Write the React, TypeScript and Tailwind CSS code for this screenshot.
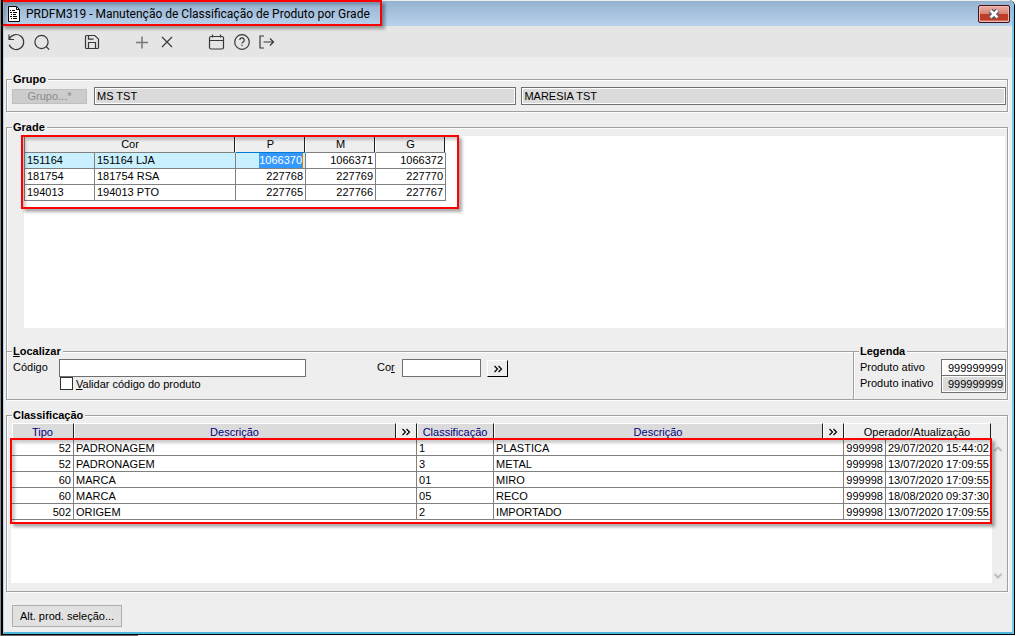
import type { ReactNode } from "react";

const gradeRows = [
  { code: "151164", name: "151164 LJA", sizes: ["1066370", "1066371", "1066372"] },
  { code: "181754", name: "181754 RSA", sizes: ["227768", "227769", "227770"] },
  { code: "194013", name: "194013 PTO", sizes: ["227765", "227766", "227767"] },
];

const classRows = [
  { type: "52", desc: "PADRONAGEM", cls: "1", clsDesc: "PLASTICA", user: "999998", date: "29/07/2020 15:44:02" },
  { type: "52", desc: "PADRONAGEM", cls: "3", clsDesc: "METAL", user: "999998", date: "13/07/2020 17:09:55" },
  { type: "60", desc: "MARCA", cls: "01", clsDesc: "MIRO", user: "999998", date: "13/07/2020 17:09:55" },
  { type: "60", desc: "MARCA", cls: "05", clsDesc: "RECO", user: "999998", date: "18/08/2020 09:37:30" },
  { type: "502", desc: "ORIGEM", cls: "2", clsDesc: "IMPORTADO", user: "999998", date: "13/07/2020 17:09:55" },
];

const fieldset = "min-w-0 border border-[#a0a0a0] shadow-[1px_1px_0_#fff,inset_1px_1px_0_#fff]";
const legend = "ml-[5px] h-[15px] bg-[#eeeeee] pr-0.5 pl-px text-[11px] leading-[15px] font-bold";
const textBox = "h-[18px] min-w-0 border border-[#707070] px-0.5 outline-none";
const gradeHead =
  "h-4 border-t border-r border-b border-t-white border-r-white p-0 text-center font-normal shadow-[inset_-1px_0_0_#202020]";
const classHead =
  "h-[17px] border-t border-r border-t-white border-r-[#202020] p-0 text-center font-normal shadow-[inset_1px_0_0_#fff]";
const cell = "h-4 overflow-hidden border-r border-b border-[#808080] px-0.5 whitespace-nowrap";
const gradeCell = `${cell} py-0`;
const classCell = `${cell} pt-px pb-0 leading-[14px]`;

const Highlight = ({ className }: { className: string }) => (
  <div
    className={`pointer-events-none absolute border-2 border-[#ff0000] shadow-[3px_3px_3px_#00000055,inset_3px_3px_3px_#00000033] ${className}`}
  />
);

const ToolButton = ({ label, className = "", children }: { label: string; className?: string; children: ReactNode }) => (
  <button type="button" aria-label={label} className={`flex w-[25px] justify-center text-[#383838] ${className}`}>
    <svg viewBox="0 0 20 20" className="size-5" fill="none" stroke="currentColor" strokeWidth="1.2">
      {children}
    </svg>
  </button>
);

const Chevrons = () => (
  <svg viewBox="0 0 10 8" className="mx-auto h-2 w-2.5" fill="none" stroke="#000" strokeWidth="1.2">
    <path d="M1.5 1 4.5 4l-3 3M5.5 1l3 3-3 3" />
  </svg>
);

const TitleBar = () => (
  <header className="relative flex h-[25px] items-center bg-linear-to-b from-[#94b2cf] to-[#b9d1ec] pr-0.5 pl-1">
    <svg viewBox="0 0 12 16" className="mr-1.5 h-4 w-3">
      <path d="M.5.5h8l3 3v12H.5z" fill="#fff" stroke="#000" />
      <path d="M8.5.5v3h3" fill="none" stroke="#000" />
      <path d="M2 4.5h1m1 0h3M2 6.5h2m1 0h4M3 8.5h1m1 0h3M2 10.5h2m1 0h4M3 12.5h1m1 0h4" stroke="#000" />
    </svg>
    <h1 className="font-[Roboto,sans-serif] text-[12px] leading-4 text-black">
      PRDFM319 - Manutenção de Classificação de Produto por Grade
    </h1>
    <button
      type="button"
      aria-label="Fechar"
      className="ml-auto flex h-[18px] w-8 items-center justify-center rounded-[2px] border border-[#42121b] bg-linear-to-b from-[#eab0a8] from-0% via-[#d98678] via-45% to-[#cf6b58] shadow-[inset_0_0_0_1px_#f0b8b0]"
    >
      <svg viewBox="0 0 30 16" className="h-4 w-[30px]">
        <path d="M1 8h28v6H1z" fill="#bd3d27" />
        <path d="m11.500 4.500 7 7m0-7-7 7" stroke="#4b5067" strokeWidth="5" />
        <path d="m11.500 4.500 7 7m0-7-7 7" stroke="#fff" strokeWidth="2.600" />
      </svg>
    </button>
    <Highlight className="-top-px -left-[3px] h-[26px] w-[381px]" />
  </header>
);

const Toolbar = () => (
  <nav className="flex h-[31px] items-center bg-[#e5e5e5]">
    <ToolButton label="Desfazer">
      <path d="M2 2.500v5h5M2.200 7.300a7.500 7.500 0 1 1 0 5.500" />
    </ToolButton>
    <ToolButton label="Pesquisar">
      <circle cx="9.500" cy="10" r="6.600" />
      <path d="m14.200 14.700 3 3" />
    </ToolButton>
    <ToolButton label="Salvar" className="ml-[25px]">
      <path d="M4.500 3.500h8.300l3.700 3.700v8.300a1 1 0 0 1-1 1h-11a1 1 0 0 1-1-1v-11a1 1 0 0 1 1-1zM6.500 3.500v3.700h5M6.500 16.500v-6h7v6" />
    </ToolButton>
    <ToolButton label="Incluir" className="ml-[25px]">
      <path d="M10 4.500v12M4 10.500h12" stroke="#777" strokeWidth="1.500" />
    </ToolButton>
    <ToolButton label="Excluir">
      <path d="m5 5 10 10M15 5 5 15" />
    </ToolButton>
    <ToolButton label="Calendário" className="ml-[25px]">
      <rect x="2.500" y="4.500" width="14" height="12.500" rx="1.500" />
      <path d="M2.500 8.500h14M5.500 2.500v3M13.500 2.500v3" />
    </ToolButton>
    <ToolButton label="Ajuda">
      <circle cx="10" cy="10" r="7.300" />
      <path d="M7.800 8a2.200 2.200 0 1 1 3.400 1.900c-.8.500-1.200.8-1.200 1.700M10 12.800v1.200" />
    </ToolButton>
    <ToolButton label="Sair">
      <path d="M7 4h-4v12h4M6.500 10h10M13 6.500l3.500 3.500-3.500 3.500" />
    </ToolButton>
  </nav>
);

const GroupPanel = () => (
  <fieldset className={fieldset}>
    <legend className={legend}>Grupo</legend>
    <div className="flex items-center pr-px pb-1.5 pl-[5px]">
      <button type="button" disabled className="mr-[7px] h-[15px] w-[75px] border border-[#bfbfbf] bg-[#cccccc] leading-3 text-[#8b8b8b]">
        Grupo...*
      </button>
      <input
        aria-label="Grupo"
        readOnly
        defaultValue="MS TST"
        className={`${textBox} mr-[5px] flex-[422] bg-[#dbdbdb] shadow-[inset_0_0_0_1px_#fff]`}
      />
      <input
        aria-label="Descrição do grupo"
        readOnly
        defaultValue="MARESIA TST"
        className={`${textBox} flex-[485] bg-[#dbdbdb] shadow-[inset_0_0_0_1px_#fff]`}
      />
    </div>
  </fieldset>
);

const GradePanel = () => (
  <fieldset className={`${fieldset} border-b-0`}>
    <legend className={legend}>Grade</legend>
    <div className="mt-px mr-0.5 mb-[23px] ml-[17px] min-h-[192px] bg-white">
      <div className="relative w-fit border-l border-[#808080]">
        <table className="w-[421px] table-fixed border-separate border-spacing-0">
          <colgroup>
            <col className="w-[70px]" />
            <col className="w-[141px]" />
            <col className="w-[70px]" />
            <col className="w-[70px]" />
            <col className="w-[70px]" />
          </colgroup>
          <thead className="bg-[#eeeeee]">
            <tr>
              <th colSpan={2} className={`${gradeHead} border-b-[#808080]`}>Cor</th>
              <th className={`${gradeHead} border-b-[#0078d7]`}>P</th>
              <th className={`${gradeHead} border-b-[#808080]`}>M</th>
              <th className={`${gradeHead} border-b-[#808080]`}>G</th>
            </tr>
          </thead>
          <tbody>
            {gradeRows.map((row, i) => (
              <tr key={row.code}>
                <td className={`${gradeCell} ${i === 0 ? "bg-[#c8f0ff]" : ""}`}>{row.code}</td>
                <td className={`${gradeCell} ${i === 0 ? "bg-[#c8f0ff]" : ""}`}>{row.name}</td>
                {row.sizes.map((size, j) => (
                  <td key={size} className={`${gradeCell} text-right ${i === 0 && j === 0 ? "bg-[#c8f0ff]" : ""}`}>
                    {i === 0 && j === 0 ? (
                      <span className="inline-block h-[15px] border-r border-[#e08000] bg-[#3399ff] text-white">{size}</span>
                    ) : (
                      size
                    )}
                  </td>
                ))}
              </tr>
            ))}
          </tbody>
        </table>
        <Highlight className="-top-px -right-[13px] -bottom-2 -left-1" />
      </div>
    </div>
  </fieldset>
);

const SearchPanel = () => (
  <div className="-mt-[7px] flex">
    <fieldset className={`${fieldset} flex-1 border-r-0`}>
      <legend className={legend}>
        <span className="underline">L</span>ocalizar
      </legend>
      <div className="flex items-start pl-1.5">
        <label htmlFor="codigo" className="w-[46px] leading-[17px]">Código</label>
        <input id="codigo" className={`${textBox} w-[247px] bg-white`} />
        <label htmlFor="cor" className="ml-[71px] w-[25px] leading-[17px]">
          Co<span className="underline">r</span>
        </label>
        <input id="cor" className={`${textBox} w-[79px] bg-white`} />
        <button
          type="button"
          aria-label="Pesquisar cor"
          className="mt-px ml-1.5 h-[17px] w-[21px] border-t border-r border-b border-l border-t-white border-r-black border-b-black border-l-white bg-[#eeeeee]"
        >
          <Chevrons />
        </button>
      </div>
      <label className="ml-[53px] flex h-[22px] w-fit items-start gap-[3px] leading-[15px]">
        <input type="checkbox" className="size-[13px] appearance-none border border-[#303030] bg-white checked:bg-[#3399ff]" />
        <span>
          <span className="underline">V</span>alidar código do produto
        </span>
      </label>
    </fieldset>
    <fieldset className={`${fieldset} w-[155px]`}>
      <legend className={legend}>Legenda</legend>
      <div className="flex h-4 items-start justify-between pr-px pl-1.5">
        <label htmlFor="ativo" className="leading-[17px]">Produto ativo</label>
        <input id="ativo" readOnly defaultValue="999999999" className={`${textBox} w-[65px] bg-white text-right`} />
      </div>
      <div className="flex h-4 items-start justify-between pr-px pl-1.5">
        <label htmlFor="inativo" className="leading-[17px]">Produto inativo</label>
        <input
          id="inativo"
          readOnly
          defaultValue="999999999"
          className={`${textBox} w-[65px] bg-[#dbdbdb] text-right shadow-[inset_0_0_0_1px_#fff]`}
        />
      </div>
    </fieldset>
  </div>
);

const ClassificationPanel = () => (
  <fieldset className={`${fieldset} mt-2`}>
    <legend className={legend}>Classificação</legend>
    <div className="mr-[3px] mb-2 ml-1 flex min-h-[160px]">
      <div className="min-w-0 flex-1 bg-white">
        <div className="relative bg-[#eeeeee] pr-px pl-px">
          <table className="w-full table-fixed border-separate border-spacing-0">
            <colgroup>
              <col className="w-[62px]" />
              <col className="w-[32.9%]" />
              <col className="w-[21px]" />
              <col className="w-[77px]" />
              <col />
              <col className="w-[21px]" />
              <col className="w-[42px]" />
              <col className="w-[105px]" />
            </colgroup>
            <thead className="text-[#000080]">
              <tr>
                <th className={`${classHead} bg-[#dbdbdb]`}>Tipo</th>
                <th className={`${classHead} bg-[#dbdbdb]`}>Descrição</th>
                <th className={classHead}>
                  <button type="button" aria-label="Pesquisar tipo" className="block w-full">
                    <Chevrons />
                  </button>
                </th>
                <th className={`${classHead} bg-[#dbdbdb]`}>Classificação</th>
                <th className={`${classHead} bg-[#dbdbdb]`}>Descrição</th>
                <th className={classHead}>
                  <button type="button" aria-label="Pesquisar classificação" className="block w-full">
                    <Chevrons />
                  </button>
                </th>
                <th colSpan={2} className={`${classHead} text-black`}>Operador/Atualização</th>
              </tr>
            </thead>
            <tbody className="bg-white">
              {classRows.map((row, i) => (
                <tr key={i}>
                  <td className={`${classCell} text-right`}>{row.type}</td>
                  <td colSpan={2} className={classCell}>{row.desc}</td>
                  <td className={classCell}>{row.cls}</td>
                  <td colSpan={2} className={classCell}>{row.clsDesc}</td>
                  <td className={`${classCell} text-right`}>{row.user}</td>
                  <td className={classCell}>{row.date}</td>
                </tr>
              ))}
            </tbody>
          </table>
          <Highlight className="top-[15px] right-0 -bottom-1 -left-px" />
        </div>
      </div>
      <div className="flex w-3 flex-col items-center justify-between pt-[23px] pb-1">
        <svg viewBox="0 0 8 6" className="h-1.5 w-2" fill="none" stroke="#bdbdbd" strokeWidth="2">
          <path d="M.5 5 4 1.500 7.500 5" />
        </svg>
        <svg viewBox="0 0 8 6" className="h-1.5 w-2" fill="none" stroke="#bdbdbd" strokeWidth="2">
          <path d="M.5 1 4 4.500 7.500 1" />
        </svg>
      </div>
    </div>
  </fieldset>
);

export default function App() {
  return (
    <div className="min-h-screen border-l border-[#8a8a8a] bg-white pr-px">
      <div className="overflow-hidden rounded-tr-md border-r border-b border-l-2 border-black bg-[#eeeeee] pt-px font-['Liberation_Sans',Arial,sans-serif] text-[11px] leading-[15px] text-black">
        <div className="border-r-2 border-b-2 border-l border-r-[#7cc4e8] border-b-[#4db8dc] border-l-[#b9d1ea]">
          <TitleBar />
          <Toolbar />
          <main className="pt-[15px] pr-1 pb-[5px] pl-0.5">
            <GroupPanel />
            <div className="h-2" />
            <GradePanel />
            <SearchPanel />
            <ClassificationPanel />
            <button type="button" className="mt-[13px] ml-1.5 h-[22px] w-[110px] border border-[#adadad] bg-[#e1e1e1]">
              Alt. prod. seleção...
            </button>
          </main>
        </div>
      </div>
      <div className="h-px w-[137px] bg-[#6b6b6b]" />
    </div>
  );
}
